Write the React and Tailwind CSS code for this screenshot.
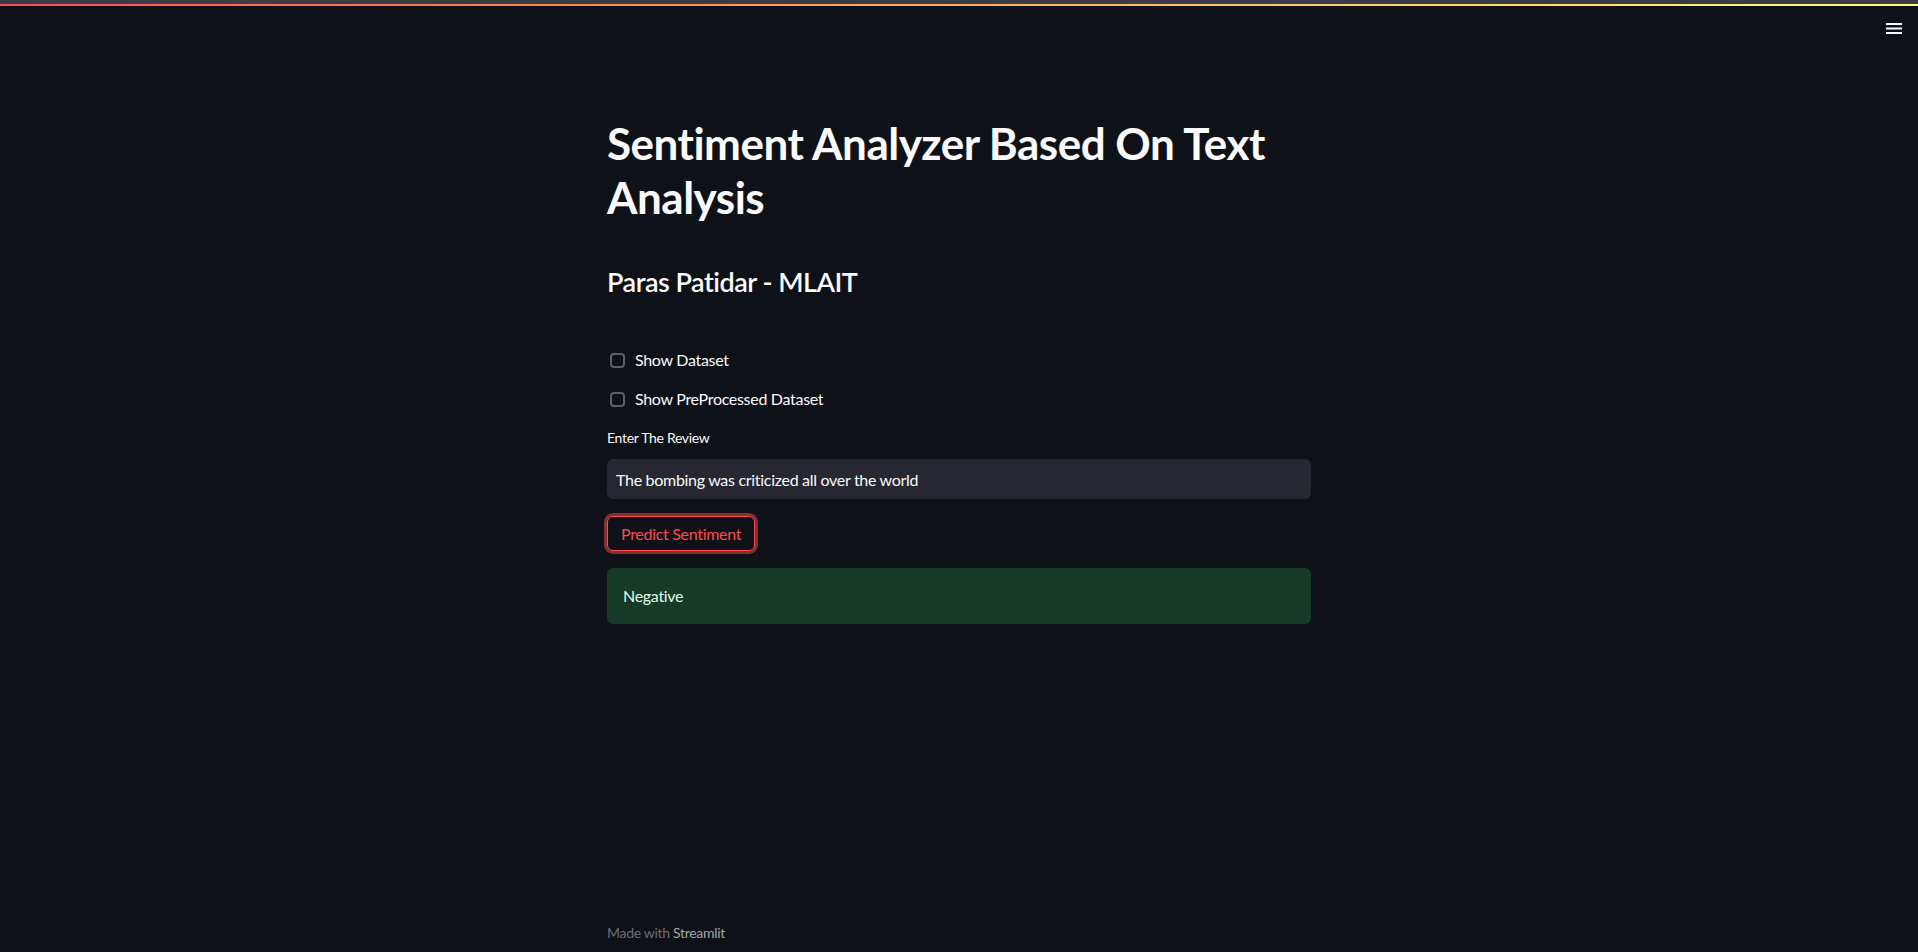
import React, { useState } from "react";

const font = "font-['Lato','Open_Sans',sans-serif]";

const Checkbox = ({ label }) => {
  const [checked, setChecked] = useState(false);
  return (
    <label className="flex items-center h-6 cursor-pointer select-none">
      <span
        onClick={() => setChecked(!checked)}
        className={`ml-[3px] w-[15px] h-[15px] rounded-[4px] border-2 ${
          checked ? "bg-[#ff4b4b] border-[#ff4b4b]" : "border-[#5b5e67]"
        }`}
      />
      <span className="ml-[10px] text-[16px] leading-6 text-[#fafafa]">{label}</span>
    </label>
  );
};

const App = () => {
  const [review, setReview] = useState("The bombing was criticized all over the world");

  return (
    <div
      className={`h-screen bg-[#0e1117] flex flex-col overflow-hidden text-[#fafafa] tracking-[-0.3px] ${font}`}
    >
      {/* top decoration */}
      <div className="h-1 bg-[#393b46]" />
      <div className="h-[2px] bg-linear-to-r from-[#ff4b4b] to-[#ffff80]" />

      <header className="flex justify-end pr-4 pt-[17px]">
        <svg width="16" height="11" viewBox="0 0 16 11" className="text-[#fafafa]">
          <rect x="0" y="0" width="16" height="2" fill="currentColor" />
          <rect x="0" y="4.5" width="16" height="2" fill="currentColor" />
          <rect x="0" y="9" width="16" height="2" fill="currentColor" />
        </svg>
      </header>

      <main className="flex-1 w-[704px] mx-auto pt-[82px]">
        <h1 className="text-[44px] font-bold leading-[54px] tracking-[-0.5px]">
          Sentiment Analyzer Based On Text Analysis
        </h1>

        <h3 className="mt-[41px] text-[27px] font-semibold leading-[34px] tracking-[-0.5px]">
          Paras Patidar - MLAIT
        </h3>

        <div className="mt-[49px] flex flex-col gap-[15px]">
          <Checkbox label="Show Dataset" />
          <Checkbox label="Show PreProcessed Dataset" />
        </div>

        <div className="mt-[17px] text-[14px] leading-5 text-[#fafafa]">Enter The Review</div>
        <input
          value={review}
          onChange={(e) => setReview(e.target.value)}
          className="mt-[11px] w-full h-10 rounded-[6px] bg-[#262730] pl-[9px] text-[16px] text-[#fafafa] outline-none"
        />

        <button
          type="button"
          className="mt-[17px] h-[35px] px-[13px] rounded-[6px] border border-[#ff4b4b] text-[#ff4b4b] text-[16px] leading-6 shadow-[0_0_0_3px_rgba(255,75,75,0.5)]"
        >
          Predict Sentiment
        </button>

        <div className="mt-[17px] h-14 rounded-[6px] bg-[#173928] px-4 flex items-center text-[16px] text-[#dffde9]">
          Negative
        </div>
      </main>

      <footer className="w-[704px] mx-auto pb-[9px] text-[14px] leading-5 text-[#6c6e75]">
        Made with <span className="text-[#a3a5aa]">Streamlit</span>
      </footer>
    </div>
  );
};

export default App;
